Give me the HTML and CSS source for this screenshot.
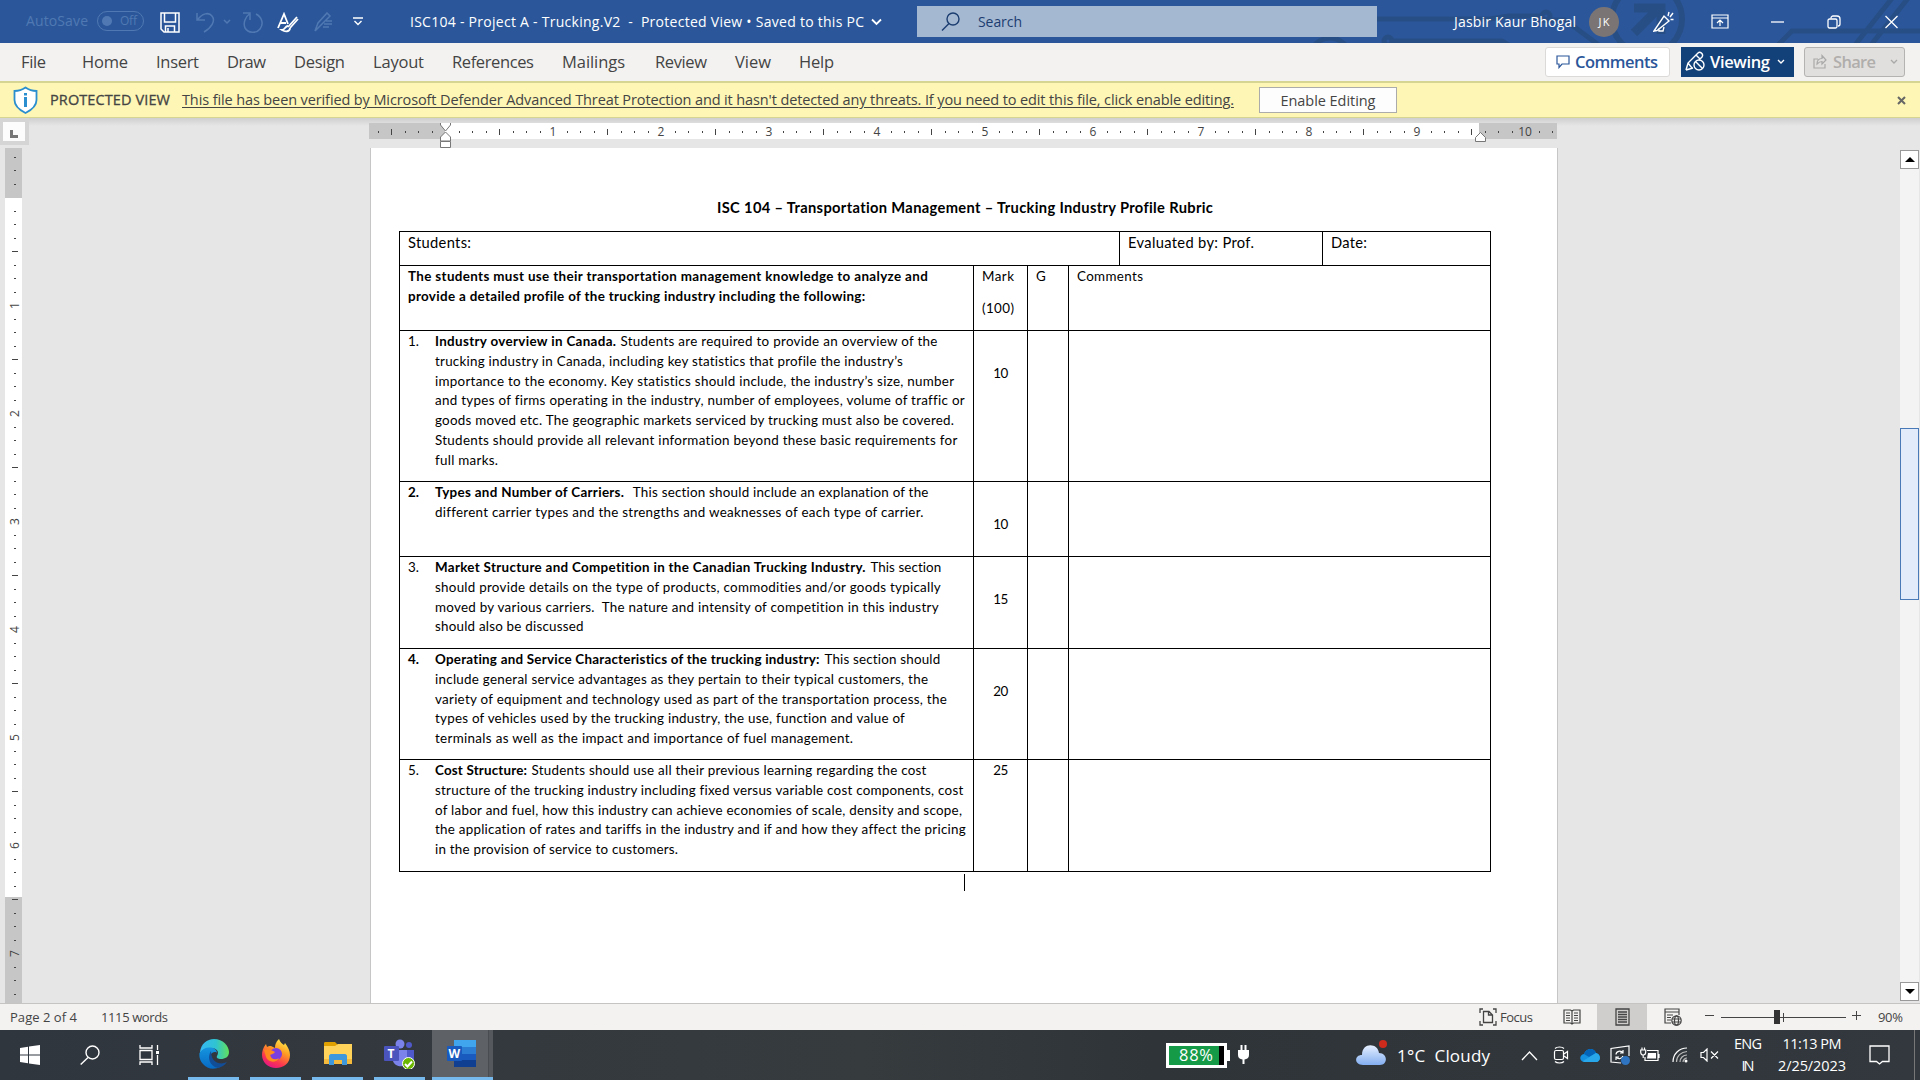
FILE: index.html
```html
<!DOCTYPE html>
<html lang="en">
<head>
    <meta charset="UTF-8">
    <title>ISC104 - Project A - Trucking.V2</title>
    <link rel="stylesheet" href="styles.css">
</head>
<body>

    <header class="titlebar">
        <svg class="circuit" width="640" height="43" fill="none" stroke="#284e86" stroke-width="5">
            <path d="M97 19H210l18-3h32"/><circle cx="266" cy="16" r="4"/>
            <circle cx="50" cy="58" r="20"/>
            <circle cx="108" cy="41" r="4"/><path d="M112 41h110l20 12M255 20h30l35 26"/>
            <circle cx="367" cy="19" r="35" stroke-width="6"/>
            <path d="M354 33l24-24M354 8h27v26" stroke-width="9"/>
            <path d="M498 45l14-14h128M575 45l38-48M591 45l38-48"/>
        </svg>
        <span class="autosave" data-w="62">AutoSave</span>
        <span class="toggle"><i></i><span data-w="17">Off</span></span>
        <svg class="save" width="20" height="21" fill="none" stroke="#fff" stroke-width="1.5"><path d="M1 1h18v19H4l-3-3z"/><path d="M4.500 1v9h11V1M5.500 20v-6h9v6M8 20v-4"/></svg>
        <svg class="undo" width="19" height="21" fill="none" stroke="#5079b3" stroke-width="1.500"><path d="M1 1v7h8M1.500 8C6 1 13 0 16 4c4 5-1 12-8 16"/></svg>
        <svg class="chev1" width="8" height="6" fill="none" stroke="#5079b3" stroke-width="1.500"><path d="M1 1l3 3 3-3"/></svg>
        <svg class="redo" width="22" height="21" fill="none" stroke="#5079b3" stroke-width="1.500"><path d="M1 1h7v7M14 2C20 5 22 12 18 17c-4 5-12 4-15-1C1 11 3 5 8 1.500"/></svg>
        <svg class="editor" width="22" height="21" fill="none" stroke="#fff" stroke-width="1.800"><path d="M1 16L7 2l4 10M3 11h6M20 5l-9 10M21 7l-8 9"/><path d="M11 14c-3 0-3 4-6 4 3 2 8 2 8-2"/></svg>
        <svg class="pen" width="20" height="21" fill="none" stroke="#5079b3" stroke-width="1.500"><path d="M1 19l3-8L13 1l3 3-10 10-5 5M12 9h6M10 12h8M9 15h6"/></svg>
        <svg class="custom" width="10" height="9" fill="none" stroke="#fff" stroke-width="1.400"><path d="M0 1h10M1.500 4L5 7.500 8.500 4"/></svg>
        <span class="docname" data-w="454">ISC104 - Project A - Trucking.V2&nbsp; -&nbsp; Protected View • Saved to this PC</span>
        <svg class="chev2" width="11" height="8" fill="none" stroke="#fff" stroke-width="1.800"><path d="M1 1.500l4.500 4.500L10 1.500"/></svg>
        <div class="search">
            <svg width="19" height="20" fill="none" stroke="#1b3d70" stroke-width="1.400"><circle cx="12" cy="7" r="6"/><path d="M8 11.500L1 18.500"/></svg>
            <span data-w="44">Search</span>
        </div>
        <span class="user" data-w="122">Jasbir Kaur Bhogal</span>
        <span class="avatar"><span data-w="11">JK</span></span>
        <svg class="mega" width="22" height="22" fill="none" stroke="#fff" stroke-width="1.400"><path d="M1 20L11 5l5 5-12 9.500zM6 17v3h4l1-4M15 5l1-4M17 6l3-4M17.500 8.500h3"/></svg>
        <svg class="ribbon" width="18" height="15" fill="none" stroke="#fff" stroke-width="1.200"><path d="M1 1h16v13H1zM1 4h16M9 12V6M6 9l3-3 3 3"/></svg>
        <svg class="min" width="13" height="2"><path d="M0 1h13" stroke="#fff" stroke-width="1.300"/></svg>
        <svg class="restore" width="14" height="14" fill="none" stroke="#fff" stroke-width="1.300"><rect x="1" y="4" width="9" height="9" rx="1.500"/><path d="M4 3.500V3c0-1 1-2 2-2h4c2 0 3 1 3 3v5c0 1-1 2-2 2"/></svg>
        <svg class="close" width="13" height="14" stroke="#fff" stroke-width="1.300"><path d="M.5 1l12 12M12.500 1l-12 12"/></svg>
    </header>

    <nav class="menu">
        <span data-w="25">File</span>
        <span data-w="46">Home</span>
        <span data-w="43">Insert</span>
        <span data-w="39">Draw</span>
        <span data-w="51">Design</span>
        <span data-w="51">Layout</span>
        <span data-w="82">References</span>
        <span class="mailings" data-w="63">Mailings</span>
        <span data-w="52">Review</span>
        <span data-w="36">View</span>
        <span data-w="35">Help</span>
        <div class="btn comments">
            <svg width="14" height="14" fill="none" stroke="#2b579a" stroke-width="1.200"><path d="M1 1h12v8H6l-3 3.500V9H1z"/></svg>
            <b data-w="83">Comments</b>
        </div>
        <div class="btn viewing">
            <svg width="21" height="21" fill="none" stroke="#fff" stroke-width="1.400"><path d="M1 19l2-7L13 2c2-2 6 1 4 4l-3 3M1 19l7-2M3 12l4 5M11 4l4 4"/><circle cx="14" cy="14" r="5"/><path d="M10.500 10.500l7 7"/></svg>
            <b data-w="60">Viewing</b>
            <svg width="8" height="6" fill="none" stroke="#fff" stroke-width="1.400"><path d="M1 1l3 3 3-3"/></svg>
        </div>
        <div class="btn share">
            <svg width="14" height="15" fill="none" stroke="#a9a9a9" stroke-width="1.200"><path d="M5 5H1v9h11v-4M4 10c0-4 2-5.500 5-5.500V1.500l4 4.500-4 4V7.500c-2 0-3 .5-5 2.500z"/></svg>
            <b data-w="43">Share</b>
            <svg width="8" height="6" fill="none" stroke="#a9a9a9" stroke-width="1.300"><path d="M1 1l3 3 3-3"/></svg>
        </div>
    </nav>

    <div class="message">
        <svg class="shield" width="25" height="28" fill="#fff" stroke="#2b8fcf" stroke-width="1.800"><path d="M12.500 1.500C9 4 5 5 1.500 5v9c0 6 5 10 11 13 6-3 11-7 11-13V5C20 5 16 4 12.500 1.500z"/><path d="M12.500 11v10M12.500 7v2.500" stroke-width="3"/></svg>
        <span class="pv" data-w="120">PROTECTED VIEW</span>
        <span class="link" data-w="1052">This file has been verified by Microsoft Defender Advanced Threat Protection and it hasn't detected any threats. If you need to edit this file, click enable editing.</span>
        <span class="enable"><span data-w="95">Enable Editing</span></span>
        <svg class="dismiss" width="9" height="9" stroke="#666" stroke-width="2"><path d="M1 1l7 7M8 1L1 8"/></svg>
    </div>

    <main class="workspace">
        <div class="ruler-row">
            <div class="corner"><div><i></i></div></div>
            <svg id="hruler" width="1190" height="26"></svg>
        </div>
        <div class="doc-row">
            <svg id="vruler" width="17" height="855"></svg>
            <div class="page">
                <h1><span data-w="496">ISC 104 – Transportation Management – Trucking Industry Profile Rubric</span></h1>
                <table class="rubric">
                    <colgroup><col class="c1"><col class="c2"><col class="c3"><col class="c4"><col class="c5"><col class="c6"></colgroup>
                    <tr class="r1">
                        <td colspan="4"><span data-w="63">Students:</span></td>
                        <td><span data-w="126">Evaluated by: Prof.</span></td>
                        <td><span data-w="36">Date:</span></td>
                    </tr>
                    <tr class="r2">
                        <td><b data-w="520">The students must use their transportation management knowledge to analyze and</b><br><b data-w="457">provide a detailed profile of the trucking industry including the following:</b></td>
                        <td class="head"><p><span data-w="32">Mark</span></p><p><span data-w="32">(100)</span></p></td>
                        <td><span>G</span></td>
                        <td colspan="3"><span data-w="66">Comments</span></td>
                    </tr>
                    <tr class="r3">
                        <td><div class="item"><span>1.</span><div><b data-w="181">Industry overview in Canada.</b> <span data-w="317">Students are required to provide an overview of the</span><br>
                            <span data-w="468">trucking industry in Canada, including key statistics that profile the industry’s</span><br>
                            <span data-w="519.5">importance to the economy. Key statistics should include, the industry’s size, number</span><br>
                            <span data-w="529">and types of firms operating in the industry, number of employees, volume of traffic or</span><br>
                            <span data-w="519">goods moved etc. The geographic markets serviced by trucking must also be covered.</span><br>
                            <span data-w="522.5">Students should provide all relevant information beyond these basic requirements for</span><br>
                            <span data-w="63">full marks.</span></div></div></td>
                        <td class="mark low"><span data-w="15">10</span></td><td></td><td colspan="3"></td>
                    </tr>
                    <tr class="r4">
                        <td><div class="item"><b>2.</b><div><b data-w="189">Types and Number of Carriers.</b>&nbsp; <span data-w="296">This section should include an explanation of the</span><br>
                            <span data-w="488">different carrier types and the strengths and weaknesses of each type of carrier.</span></div></div></td>
                        <td class="mark low"><span data-w="15">10</span></td><td></td><td colspan="3"></td>
                    </tr>
                    <tr class="r5">
                        <td><div class="item"><span>3.</span><div><b data-w="431">Market Structure and Competition in the Canadian Trucking Industry.</b> <span data-w="71">This section</span><br>
                            <span data-w="506">should provide details on the type of products, commodities and/or goods typically</span><br>
                            <span data-w="504">moved by various carriers.&nbsp; The nature and intensity of competition in this industry</span><br>
                            <span data-w="148.5">should also be discussed</span></div></div></td>
                        <td class="mark low"><span data-w="15">15</span></td><td></td><td colspan="3"></td>
                    </tr>
                    <tr class="r6">
                        <td><div class="item"><b>4.</b><div><b data-w="385">Operating and Service Characteristics of the trucking industry:</b> <span data-w="116">This section should</span><br>
                            <span data-w="493">include general service advantages as they pertain to their typical customers, the</span><br>
                            <span data-w="512">variety of equipment and technology used as part of the transportation process, the</span><br>
                            <span data-w="470">types of vehicles used by the trucking industry, the use, function and value of</span><br>
                            <span data-w="418">terminals as well as the impact and importance of fuel management.</span></div></div></td>
                        <td class="mark low"><span data-w="15">20</span></td><td></td><td colspan="3"></td>
                    </tr>
                    <tr class="r7">
                        <td><div class="item"><span>5.</span><div><b data-w="92">Cost Structure:</b> <span data-w="395">Students should use all their previous learning regarding the cost</span><br>
                            <span data-w="528">structure of the trucking industry including fixed versus variable cost components, cost</span><br>
                            <span data-w="527">of labor and fuel, how this industry can achieve economies of scale, density and scope,</span><br>
                            <span data-w="530">the application of rates and tariffs in the industry and if and how they affect the pricing</span><br>
                            <span data-w="243">in the provision of service to customers.</span></div></div></td>
                        <td class="mark"><span data-w="15">25</span></td><td></td><td colspan="3"></td>
                    </tr>
                </table>
                <div class="caret"></div>
            </div>
            <div class="scrollbar">
                <div class="arrow"><svg width="10" height="5"><path d="M0 5l5-5 5 5z"/></svg></div>
                <div class="thumb"></div>
                <div class="arrow"><svg width="10" height="5"><path d="M0 0l5 5 5-5z"/></svg></div>
            </div>
        </div>
    </main>

    <footer class="status">
        <span class="pages" data-w="67">Page 2 of 4</span>
        <span class="words" data-w="67">1115 words</span>
        <svg class="focus-icon" width="18" height="18" fill="none" stroke="#444" stroke-width="1.300"><path d="M4 1H1v4M14 1h3v4M4 17H1v-4M14 17h3v-4M4.500 3.500H10l3.500 3.500v7.500h-9zM9.500 3.500V7h4"/></svg>
        <span class="focus" data-w="33">Focus</span>
        <svg class="read" width="18" height="16" fill="none" stroke="#444" stroke-width="1.200"><path d="M9 2L7.500 1H1v13h6.500L9 15l1.500-1H17V1h-6.500zM9 2v13M3 4h4M3 6.500h4M3 9h4M3 11.500h4M11 4h4M11 6.500h4M11 9h4M11 11.500h4"/></svg>
        <div class="print"><svg width="15" height="18" fill="none" stroke="#444" stroke-width="1.300"><path d="M1 1h13v16H1zM3 4h9M3 6.500h9M3 9h9M3 11.500h9M3 14h9"/></svg></div>
        <svg class="web" width="18" height="18" fill="none" stroke="#444" stroke-width="1.200"><path d="M7 15H1V1h14v6M1 4h14M3 7h6M3 9.500h4M3 12h4"/><circle cx="12.500" cy="12.500" r="4.700"/><ellipse cx="12.500" cy="12.500" rx="2" ry="4.700"/><path d="M8 11h9M8 14h9"/></svg>
        <svg class="zoom" width="158" height="16" stroke="#444" fill="none"><path d="M1 6.500h9M17 8.500h125M148 6.500h9M152.500 2v9M79.500 4v9"/><path d="M70 1h6v14h-6z" fill="#333" stroke="none"/></svg>
        <span class="percent" data-w="25">90%</span>
    </footer>

    <div class="taskbar">
        <svg class="start" width="20" height="20" fill="#fff"><path d="M0 3l8-1.200v7.700H0zM9 1.600L20 0v9.500H9zM0 10.500h8v7.700L0 17zM9 10.500h11V20L9 18.400z"/></svg>
        <svg class="find" width="20" height="20" fill="none" stroke="#fff" stroke-width="1.400"><circle cx="12.500" cy="7.500" r="6.500"/><path d="M8 12.500L.7 19.500"/></svg>
        <svg class="tasks" width="21" height="20" fill="none" stroke="#fff" stroke-width="1.300"><path d="M1 0v3h12V0M1 20v-3h12v3M1 5.500h12v9H1zM18.500 0v5M18.500 10v10"/><path d="M17 6h3v3h-3z" fill="#fff" stroke="none"/></svg>
        <div class="app edge">
            <svg width="30" height="30" viewBox="0 0 30 30">
                <defs>
                    <linearGradient id="eg" x1="0" x2="1"><stop offset="0" stop-color="#36b8f3"/><stop offset=".55" stop-color="#2fc3d2"/><stop offset="1" stop-color="#62e05b"/></linearGradient>
                    <linearGradient id="eb" x1="0" x2="0" y1="0" y2="1"><stop offset="0" stop-color="#1695df"/><stop offset="1" stop-color="#0669c3"/></linearGradient>
                </defs>
                <path d="M1 13C2 5 8 0 15 0c9 0 15 7 15 13 0 5-4 7-8 7-3 0-5-1-4-3 3-5-1-8-6-8-5 0-9 2-11 5z" fill="url(#eg)"/>
                <path d="M.5 14C3 10 7 8 12 8.500c3 .3 6 2.500 6 5.500-1-2-6-1-7 3-1 6 4 11 10 11-6 3-13 2-17-3C1 22 0 18 .5 14z" fill="url(#eb)"/>
                <path d="M12 12c-4 6-2 15 7 17 4-1 7-3 9-6-6 3-13 1-15-5-.7-2-1-4-1-6z" fill="#124e98"/>
            </svg>
        </div>
        <div class="app firefox">
            <svg width="28" height="30" viewBox="0 0 28 30">
                <defs><linearGradient id="ff" x1=".8" x2=".3" y1="0" y2="1"><stop offset="0" stop-color="#fff34e"/><stop offset=".4" stop-color="#ff9a22"/><stop offset=".75" stop-color="#fb3650"/><stop offset="1" stop-color="#e31587"/></linearGradient></defs>
                <path d="M17 0c1 3 3 5 5 6l1-2c3 4 5 8 5 12 0 8-6 13-14 13S0 23 0 16c0-4 1-7 4-11l1 3c1-1 2-1 4-1l4 2c0-4 1-6 4-9z" fill="url(#ff)"/>
                <circle cx="14" cy="15" r="6" fill="#7b3fe0"/>
                <path d="M2 11c4-1 8 0 11 2-1 2-4 2-5 3 1 5 6 5 9 3-2 5-11 5-13-1z" fill="#ff8a1e"/>
            </svg>
        </div>
        <div class="app files">
            <svg width="28" height="24"><path d="M0 1c0-1 1-1 2-1h9l3 3v3H0z" fill="#e0a000"/><path d="M0 4h11l3-2h14v20H0z" fill="#ffd35a"/><path d="M0 17h28v5H0z" fill="#f5b93c"/><path d="M5 23v-9c0-1 1-2 2-2h14c1 0 2 1 2 2v9h-5v-5h-8v5z" fill="#3f97dc"/></svg>
        </div>
        <div class="app teams">
            <svg width="31" height="30"><circle cx="16" cy="5" r="4.500" fill="#7b83eb"/><circle cx="25" cy="6" r="3" fill="#5059c9"/><path d="M20 11h10v9c0 4-4 6-8 4z" fill="#5059c9"/><path d="M9 11h14v11c0 7-12 7-14 0z" fill="#7b83eb"/><rect y="7" width="15" height="15" rx="1" fill="#4b53bc"/><text x="3.500" y="19" class="logo">T</text><circle cx="24.500" cy="24.500" r="6" fill="#6bb700" stroke="#fff"/><path d="M21 25l2.500 2.500 4.500-5" fill="none" stroke="#fff" stroke-width="2"/></svg>
        </div>
        <div class="app word">
            <svg width="30" height="29"><path d="M7 1h22v7H7z" fill="#41a5ee"/><path d="M7 8h22v7H7z" fill="#2b7cd3"/><path d="M7 15h22v7H7z" fill="#185abd"/><path d="M7 21h22v7H7z" fill="#103f91"/><rect y="7" width="15" height="15" rx="1" fill="#185abd"/><text x="1.500" y="19" class="logo">W</text></svg>
        </div>
        <div class="battery"><div><span data-w="34">88%</span></div></div>
        <svg class="plug" width="11" height="20" fill="#fff"><path d="M2.500 0h2v5h2V0h2v5H11v5c0 3-2 4-4.500 4.500V19h-2v-4.500C2 14 0 13 0 10V5h2.500z"/></svg>
        <svg class="cloud" width="32" height="26"><defs><linearGradient id="cl" x1="0" x2="0" y1="0" y2="1"><stop offset="0" stop-color="#e5efff"/><stop offset="1" stop-color="#83aef0"/></linearGradient></defs><path d="M7 25c-9 0-9-10-1-10C6 2 22 3 23 13c9 0 9 12 1 12z" fill="url(#cl)"/><circle cx="27" cy="4" r="4" fill="#cf2b1d"/></svg>
        <span class="weather" data-w="93">1°C&nbsp; Cloudy</span>
        <svg class="up" width="17" height="11" fill="none" stroke="#fff" stroke-width="1.300"><path d="M1 10l7.500-8L16 10"/></svg>
        <svg class="meet" width="16" height="18" fill="none" stroke="#fff" stroke-width="1.200"><rect x="1.500" y="4.500" width="9" height="9" rx="1.500"/><path d="M11 8l3.500-2.500v7L11 10M2 2.500C4 .5 9 .5 11 2.500M2 15.500c2 2 7 2 9 0"/></svg>
        <svg class="onedrive" width="20" height="14"><path d="M4 14C-1 13-1 7 4 6 6 0 14-1 16 5c5 1 5 8 1 9z" fill="#1490df"/><path d="M4 6C6 0 14-1 16 5L9 9z" fill="#0364b8"/><path d="M3 13l13-8c5 1 5 8 1 9H4z" fill="#28a8ea"/></svg>
        <svg class="sync" width="21" height="20" fill="none" stroke="#fff" stroke-width="1.200"><path d="M11 18l-10-1V3.500L19 1v10M6 9.500C6 6 11 5 13 8M13 5v3h-3M13 11c-1 3-5 3.500-7 1M6 15v-3h3"/><circle cx="15.500" cy="15.500" r="4.500" fill="#2f74c0" stroke="none"/></svg>
        <svg class="charge" width="20" height="16" fill="none" stroke="#fff" stroke-width="1.200"><path d="M7 3.500h11v10H5V10M19 7v4M.7 3h5v2c0 2-1 3-2.500 3S.7 7 .7 5zM3.200 8v3M2 3V.5M4.500 3V.5"/><path d="M8 6h8v5.500H7z" fill="#fff" stroke="none"/></svg>
        <svg class="wifi" width="16" height="16" fill="none" stroke="#fff" stroke-width="1.200"><path d="M1 15C1 7 7 1 15 1"/><path d="M4.500 15C4.500 9 9 5 15 4.500M8 15c0-4 3-7 7-7M11 15c0-2 2-4 4-4" stroke="#bbb"/><circle cx="14" cy="14" r="1.500" fill="#fff" stroke="none"/></svg>
        <svg class="mute" width="19" height="14" fill="none" stroke="#fff" stroke-width="1.200"><path d="M1 4.500h2.500L7 1v12L3.500 9.500H1zM11 3.500l7 7M18 3.500l-7 7"/></svg>
        <div class="stack lang"><span data-w="28">ENG</span><span data-w="13">IN</span></div>
        <div class="stack clock"><span data-w="59">11:13 PM</span><span data-w="68">2/25/2023</span></div>
        <svg class="notify" width="21" height="20" fill="none" stroke="#fff" stroke-width="1.300"><path d="M1 1h19v15.500h-6.500l-3 2.500-3-2.500H1z"/></svg>
        <div class="peek"></div>
    </div>

    <script src="script.js"></script>
</body>
</html>
```
FILE: styles.css
```css
* {
    box-sizing: border-box;
}
body {
    margin: 0;
    width: 1920px;
    height: 1080px;
    overflow: hidden;
    display: flex;
    flex-direction: column;
    font-family: "Open Sans", "Noto Sans", sans-serif;
    color: #444;
}
svg {
    display: block;
    flex: none;
}
[data-w] {
    display: inline-block;
    white-space: nowrap;
    flex: none;
}

/* title bar */
.titlebar {
    position: relative;
    flex: none;
    height: 43px;
    display: flex;
    align-items: center;
    background: #2b579a;
    color: #fff;
    font-size: 14px;
}
.titlebar > * {
    position: relative;
}
.titlebar > .circuit {
    position: absolute;
    left: 1280px;
    top: 0;
}
.autosave {
    margin-left: 26px;
    padding-bottom: 2px;
    color: #5079b3;
}
.toggle {
    width: 47px;
    height: 20px;
    margin: -2px 0 0 9px;
    padding: 0 6px 0 4px;
    display: flex;
    align-items: center;
    justify-content: space-between;
    border: 1px solid #5079b3;
    border-radius: 10px;
    color: #5079b3;
    font-size: 12px;
}
.toggle i {
    width: 10px;
    height: 10px;
    border-radius: 50%;
    background: #5079b3;
}
.save { margin: 2px 0 0 16px; }
.undo { margin: 2px 0 0 16px; }
.chev1 { margin-left: 8px; }
.redo { margin: 2px 0 0 11px; }
.editor { margin: 2px 0 0 13px; }
.pen { margin: 2px 0 0 15px; }
.custom { margin-left: 19px; }
.docname { margin-left: 47px; }
.chev2 { margin-left: 7px; }
.search {
    width: 460px;
    height: 31px;
    margin-left: 35px;
    padding-left: 24px;
    display: flex;
    align-items: center;
    gap: 18px;
    background: #a5b8d1;
    color: #1b3d70;
}
.user { margin-left: 77px; }
.avatar {
    width: 30px;
    height: 30px;
    margin-left: 13px;
    display: flex;
    align-items: center;
    justify-content: center;
    border-radius: 50%;
    background: #7a7574;
    font-size: 11px;
}
.mega { margin-left: 34px; }
.ribbon { margin-left: 36px; }
.min { margin-left: 42px; }
.restore { margin-left: 43px; }
.close { margin-left: 44px; }

/* ribbon tabs */
.menu {
    flex: none;
    height: 38px;
    padding: 0 0 1px 21px;
    display: flex;
    align-items: center;
    background: #f3f2f1;
    font-size: 16.5px;
}
.menu > span {
    margin-right: 28px;
}
.menu > span:first-child {
    margin-right: 36px;
}
.menu > .mailings {
    margin-right: 30px;
}
.btn {
    height: 30px;
    display: flex;
    align-items: center;
    border-radius: 3px;
}
.comments {
    width: 125px;
    margin-left: 683px;
    padding-left: 10px;
    gap: 5px;
    border: 1px solid #dcdad8;
    background: #fff;
    color: #2b579a;
}
.viewing {
    width: 113px;
    margin-left: 11px;
    padding-left: 4px;
    gap: 4px;
    border-radius: 0;
    background: #124078;
    color: #fff;
}
.viewing svg:last-child { margin-left: 3px; }
.share {
    width: 101px;
    margin-left: 10px;
    padding-left: 8px;
    gap: 6px;
    border: 1px solid #b5b3b1;
    background: #e1dfdd;
    color: #b0aeac;
}
.share svg:last-child { margin-left: 8px; }
.btn b { font-weight: 600; }

/* protected view message */
.message {
    flex: none;
    height: 37px;
    display: flex;
    align-items: center;
    border-top: 2px solid #d7d592;
    border-bottom: 1px solid #d7d592;
    background: #fdf6b4;
    font-size: 14.5px;
}
.shield { margin-left: 13px; }
.pv {
    margin-left: 12px;
    padding-bottom: 1px;
    -webkit-text-stroke: 0.3px #444;
}
.link {
    margin-left: 12px;
    padding-bottom: 1px;
    text-decoration: underline;
    text-underline-offset: 2px;
}
.enable {
    width: 138px;
    height: 26px;
    margin-left: 25px;
    display: flex;
    align-items: center;
    justify-content: center;
    border: 1px solid #ababab;
    background: #fdfdfd;
}
.dismiss { margin-left: 500px; }

/* workspace */
.workspace {
    flex: none;
    height: 885px;
    background: linear-gradient(#cfcfcf, #e6e6e6 8px);
}
.ruler-row {
    height: 30px;
    display: flex;
}
.corner {
    width: 29px;
    height: 27px;
    padding: 4px 4px 4px 3px;
    background: #d5d5d5;
}
.corner div {
    height: 19px;
    padding: 8px 0 0 7px;
    background: #fcfcfc;
}
.corner i {
    display: block;
    width: 8px;
    height: 8px;
    border-left: 3px solid #777;
    border-bottom: 3px solid #777;
}
#hruler {
    margin: 5px 0 0 340px;
}
#hruler text, #vruler text {
    font-size: 12px;
    fill: #444;
    text-anchor: middle;
}
.doc-row {
    height: 855px;
    display: flex;
}
#vruler { margin-left: 5px; }
.page {
    width: 1188px;
    margin-left: 348px;
    border-left: 1px solid #c6c6c6;
    border-right: 1px solid #c6c6c6;
    background: #fff;
    color: #000;
    font-family: Lato, sans-serif;
    font-size: 13.4px;
    line-height: 19.75px;
}
.page h1 {
    margin: 48px 0 0;
    height: 35px;
    padding-left: 346px;
    font-size: 14.700px;
    line-height: 22px;
}
.rubric {
    width: 1092px;
    margin-left: 28px;
    border-collapse: collapse;
    table-layout: fixed;
}
.rubric td {
    padding: 1px 0 0 8px;
    border: 1px solid #000;
    vertical-align: top;
}
.c1 { width: 574px; }
.c2 { width: 54px; }
.c3 { width: 41px; }
.c4 { width: 51px; }
.c5 { width: 203px; }
.c6 { width: 168px; }
.r1 {
    height: 34px;
    font-size: 14.700px;
}
.r2 { height: 65px; }
.r3 { height: 151px; }
.r4 { height: 75px; }
.r5 { height: 92px; }
.r6 { height: 111px; }
.r7 { height: 112px; }
.head p { margin: 0 0 12.500px; }
.head p:last-child { margin: 0; }
.item {
    display: flex;
}
.item > :first-child { width: 27px; }
.item > div { word-spacing: 1px; white-space: nowrap; }
.item [data-w] { word-spacing: 0; }
.rubric .mark {
    padding: 1px 0 0;
    text-align: center;
}
.rubric .low { padding-top: 33px; }
.caret {
    width: 1px;
    height: 17px;
    margin: 2px 0 0 593px;
    background: #000;
}
.scrollbar {
    width: 19px;
    height: 851px;
    margin: 2px 0 0 342px;
    background: #f3f3f3;
    display: flex;
    flex-direction: column;
}
.arrow {
    height: 19px;
    display: flex;
    align-items: center;
    justify-content: center;
    border: 1px solid #999;
    background: #fff;
}
.thumb {
    height: 172px;
    margin: 259px 0 382px;
    border: 1px solid #4a79b8;
    background: #e2ebfa;
}

/* status bar */
.status {
    flex: none;
    height: 27px;
    display: flex;
    align-items: center;
    border-top: 1px solid #c6c4c2;
    background: #f3f2f1;
    font-size: 13px;
}
.pages { margin-left: 10px; }
.words { margin-left: 24px; }
.focus-icon { margin-left: 1311px; }
.focus { margin-left: 3px; }
.read { margin-left: 30px; }
.print {
    width: 50px;
    height: 26px;
    margin-left: 16px;
    display: flex;
    align-items: center;
    justify-content: center;
    background: #d0cecc;
}
.web { margin-left: 17px; }
.zoom { margin-left: 22px; }
.percent { margin-left: 16px; }

/* taskbar */
.taskbar {
    flex: none;
    height: 50px;
    display: flex;
    align-items: center;
    background: linear-gradient(90deg, #30363e, #363b3e 45%, #2f3439 60%, #32383d);
    color: #fff;
    font-size: 15px;
}
.start { margin-left: 20px; }
.find { margin-left: 40px; }
.tasks { margin-left: 39px; }
.app {
    width: 51px;
    height: 50px;
    margin-left: 11px;
    display: flex;
    align-items: center;
    justify-content: center;
    border-bottom: 3px solid #76b9ed;
}
.edge { margin-left: 28px; }
.word {
    width: 61px;
    margin-left: 7px;
    padding-right: 2px;
    background: linear-gradient(90deg, #5e6266 56px, #3d4145 56px, #55595d 57px);
}
.logo {
    fill: #fff;
    font-size: 12px;
    font-weight: bold;
}
.battery {
    position: relative;
    width: 61px;
    height: 25px;
    margin-left: 673px;
    padding: 3px;
    background: #fff;
}
.battery::after {
    content: "";
    position: absolute;
    left: 61px;
    top: 7px;
    width: 3px;
    height: 11px;
    background: #fff;
}
.battery div {
    height: 19px;
    display: flex;
    align-items: center;
    padding: 0 0 1px 10px;
    background: linear-gradient(90deg, #159a48 50px, #000 50px);
    font-size: 16.5px;
}
.plug {
    margin-left: 11px;
}
.cloud { margin: -5px 0 0 107px; }
.weather {
    margin-left: 9px;
    font-size: 17px;
}
.up { margin-left: 31px; }
.meet { margin-left: 15px; }
.onedrive { margin-left: 11px; }
.sync { margin-left: 10px; }
.charge { margin-left: 9px; }
.wifi { margin-left: 12px; }
.mute { margin-left: 12px; }
.stack {
    display: flex;
    flex-direction: column;
    align-items: center;
    font-size: 14.500px;
    line-height: 22px;
}
.lang { margin-left: 15px; }
.clock { margin-left: 16px; }
.notify { margin-left: 23px; }
.peek {
    width: 1px;
    height: 50px;
    margin-left: 24px;
    background: #777;
}
```
FILE: script.js
```javascript
// space the letters of a label so that it takes the given width
document.querySelectorAll("[data-w]").forEach(el => {
    const width = parseFloat(el.dataset.w);
    const natural = el.getBoundingClientRect().width;
    const gaps = el.textContent.length - 1;
    el.style.letterSpacing = (width - natural) / gaps + "px";
    el.style.width = width + "px";
});

const INCH = 108;

// horizontal ruler, zero at the left margin
let h = `<rect width="1188" height="16" fill="#c6c6c6"/>
    <rect x="76" width="1034" height="16" fill="#fff"/>`;
for (let i = -5; i <= 82; i++) {
    const x = 76 + i * INCH / 8;
    if (i === 0) continue;
    if (i % 8 === 0) h += `<text x="${x}" y="13">${i / 8}</text>`;
    else if (i % 4 === 0) h += `<rect x="${Math.round(x)}" y="6" width="1" height="6" fill="#444"/>`;
    else h += `<rect x="${Math.round(x)}" y="8" width="1" height="2" fill="#444"/>`;
}
h += `<g fill="#fff" stroke="#777"><path d="M71.500 -2h10v4l-5 6-5-6zM71.500 18v-4l5-5 5 5v4zM71.500 18.500h10v6h-10z"/>
    <path d="M1106.500 18.500v-4l5-5 5 5v4z"/></g>`;
document.getElementById("hruler").innerHTML = h;

// vertical ruler, zero at the top margin
let v = `<rect width="17" height="855" fill="#c6c6c6"/>
    <rect y="50" width="17" height="699" fill="#fff"/>`;
for (let i = -3; i <= 59; i++) {
    const y = 49 + i * INCH / 8;
    if (i === 0) continue;
    if (i % 8 === 0) v += `<text transform="translate(14 ${y + 0.5}) rotate(-90)">${i / 8}</text>`;
    else if (i % 4 === 0) v += `<rect x="7" y="${Math.round(y)}" width="6" height="1" fill="#444"/>`;
    else v += `<rect x="9" y="${Math.round(y)}" width="2" height="1" fill="#444"/>`;
}
document.getElementById("vruler").innerHTML = v;
```
